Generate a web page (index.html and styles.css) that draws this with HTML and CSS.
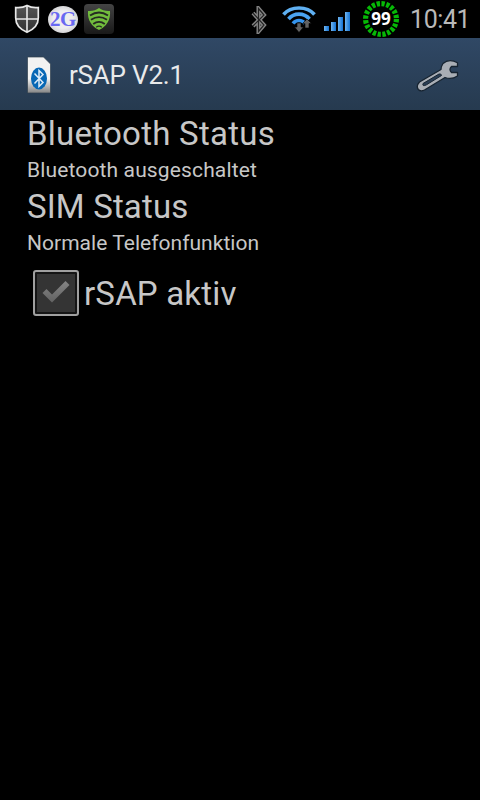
FILE: index.html
```
<!DOCTYPE html>
<html lang="de">
<head>
<meta charset="utf-8">
<title>rSAP</title>
<link rel="stylesheet" href="styles.css">
</head>
<body>
<header class="status">
  <div class="notes">
    <svg width="28" height="30" viewBox="0 0 28 30"><defs><linearGradient id="sg" x2="0" y2="1"><stop stop-color="#555"/><stop offset="1" stop-color="#333"/></linearGradient></defs><path d="M14 1.500Q19 4.200 25.300 3.500V14C25.300 21 20.500 25.500 14 28.300C7.500 25.500 2.700 21 2.700 14V3.500Q9 4.200 14 1.500Z" fill="url(#sg)" stroke="#e8e8e8" stroke-width="1.700"/><path d="M14 2V28M3 15H25" stroke="#e8e8e8" stroke-width="1.600"/></svg>
    <span class="network">2G</span>
    <svg width="30" height="30" viewBox="0 0 30 30"><defs><linearGradient id="wg" x2="0" y2="1"><stop stop-color="#444"/><stop offset="1" stop-color="#191919"/></linearGradient></defs><rect width="30" height="30" rx="4" fill="url(#wg)"/><path d="M15 4Q19.500 7.500 26 7Q27 20 15 26Q3 20 4 7Q10.500 7.500 15 4Z" fill="#72bd3d"/><g fill="none" stroke="#252a22" stroke-width="1.900"><path d="M6 11.500Q15 5.500 24 11.500M7 15.800Q15 10.500 23 15.800M9.200 20Q15 15.800 20.800 20"/><path d="M12.200 23.200Q15 21 17.800 23.200" stroke-width="1.300"/></g></svg>
  </div>
  <div class="system">
    <svg class="bt" width="16" height="28" viewBox="0 0 16 28"><path d="M2 7L13 19L7.500 25.500V2.500L13 9L2 20" fill="none" stroke="#858585" stroke-width="4"/><path d="M2 7L13 19L7.500 25.500V2.500L13 9L2 20" fill="none" stroke="#222" stroke-width="1.200"/></svg>
    <svg class="wifi" width="36" height="28" viewBox="0 0 36 28"><g fill="none" stroke-width="3.600"><path d="M2.500 9.500C10 .8 26 .8 33.500 9.500" stroke="#5fb0f2"/><path d="M7.500 14C13 7.500 23 7.500 28.500 14" stroke="#4aa3f0"/><path d="M12 18.500C15 14.500 21 14.500 24 18.500" stroke="#3594ed"/></g><path d="M16 18H20V22H22.500L18 27.500L13.500 22H16ZM24 23V18.500H21.500L26 14L30.500 18.500H28V23Z" fill="#626262" stroke="#000" stroke-width=".6"/></svg>
    <svg class="signal" width="28" height="20" viewBox="0 0 28 20"><defs><linearGradient id="bg"><stop stop-color="#70b5ef"/><stop offset="1" stop-color="#1472d3"/></linearGradient></defs><g fill="url(#bg)"><path d="M1 14H6V19H1Z"/><path d="M8 10H13V19H8Z"/><path d="M15 5H20V19H15Z"/><path d="M22 0H27V19H22Z"/></g></svg>
    <div class="battery">
      <svg width="38" height="38" viewBox="0 0 38 38"><circle cx="19" cy="19" r="15.400" fill="none" stroke="#06b806" stroke-width="5.200" stroke-dasharray="3.300 1.538"/></svg>
      <span class="level">99</span>
    </div>
    <time class="clock">10:41</time>
  </div>
</header>
<nav class="bar">
  <svg class="app-icon" width="26" height="38" viewBox="0 0 26 38"><defs><linearGradient id="cg" x2="0" y2="1"><stop offset=".6" stop-color="#f2f2f2"/><stop offset="1" stop-color="#858585"/></linearGradient></defs><path d="M1.500 1H17.500L24.500 8V37H1.500Z" fill="url(#cg)" stroke="#31404d" stroke-width=".7"/><ellipse cx="13" cy="22.500" rx="8" ry="11" fill="#0767b5"/><path d="M8.500 17.500L17 26.500L13 30.500V14.500L17 18.500L8.500 27.500" fill="none" stroke="#dcebf8" stroke-width="1.500"/></svg>
  <h1 class="app-title">rSAP V2.1</h1>
  <svg class="wrench" width="44" height="34" viewBox="0 0 44 34"><path d="M41.500 4.800Q33 0 27 5.500Q25 8.500 25 11.500L3.500 24Q-.2 28 2.300 31.500Q4.500 34 8.500 32L29 19.500Q35.500 22 41.500 18V14.500H35.500Q32.500 11.500 35.500 8.500H41.500Z" fill="#a9aeb5" stroke="#172431" stroke-width="1.300" stroke-linejoin="round"/><path d="M7 25.500L23 16Q25.500 15.500 25.500 17.500L10.500 26.800Q6 29 7 25.500Z" fill="#2a3e55" stroke="#172431" stroke-width="1"/></svg>
</nav>
<main class="content">
  <h2 class="heading">Bluetooth Status</h2>
  <p class="detail detail-bt">Bluetooth ausgeschaltet</p>
  <h2 class="heading heading-sim">SIM Status</h2>
  <p class="detail">Normale Telefonfunktion</p>
  <div class="option">
    <span class="box"><svg width="30" height="24" viewBox="0 0 30 24"><defs><linearGradient id="kg" x2="0" y2="1"><stop stop-color="#858585"/><stop offset="1" stop-color="#626262"/></linearGradient></defs><path d="M1.500 13L5.500 9L11 14.500L24.500 1L28.500 5L11 22.500Z" fill="url(#kg)"/></svg></span>
    <span class="heading option-label">rSAP aktiv</span>
  </div>
</main>
</body>
</html>
```
FILE: styles.css
```
* { box-sizing: border-box; }
body { margin: 0; min-height: 800px; background: #000; color: #c7c7c7; font-family: Roboto, sans-serif; }
svg { display: block; flex: none; }
h1, h2, p { margin: 0; font-weight: 400; white-space: nowrap; }
.status { height: 38px; display: flex; justify-content: space-between; }
.notes { display: flex; align-items: center; padding-left: 13px; gap: 7px; }
.network { width: 30px; height: 27px; border-radius: 50%; background: radial-gradient(#eeeeef 45%, #b9b9bd); color: #6969f2; font: bold 21px/27px "Liberation Serif", serif; text-align: center; letter-spacing: -.5px; margin-right: -1px; }
.system { display: flex; align-items: flex-start; padding-right: 10px; }
.bt { margin: 6px 14px 0 0; }
.wifi { margin: 5px 6px 0 0; }
.signal { margin: 12px 11px 0 0; }
.battery { width: 38px; height: 38px; display: grid; }
.battery > * { grid-area: 1 / 1; }
.level { place-self: center; color: #fff; font: bold 17px/20px "Noto Sans", sans-serif; }
.clock { width: 60px; margin-left: 10px; font-size: 25px; line-height: 40px; letter-spacing: -.4px; color: #b9b9b9; white-space: nowrap; }
.bar { height: 72px; display: flex; align-items: center; background: linear-gradient(#304865, #263a4f); padding: 0 20px 0 26px; }
.app-icon { margin-top: 2px; }
.app-title { flex: 1; margin-left: 17px; color: #e9eaeb; font-size: 26px; line-height: 36px; letter-spacing: -.2px; padding-top: 2px; }
.wrench { margin-top: 1px; }
.content { padding: 2px 27px; }
.heading { font-size: 33px; line-height: 44px; letter-spacing: .25px; }
.heading-sim { letter-spacing: .15px; }
.detail { font-size: 21px; line-height: 29px; letter-spacing: .03px; }
.detail-bt { letter-spacing: .14px; }
.option { display: flex; align-items: center; margin: 12px 0 0 6px; }
.box { width: 46px; height: 46px; border: 2px solid #a0a0a0; border-radius: 3px; background: #343434; box-shadow: inset 0 0 0 2px #151515; display: grid; place-items: center; padding-bottom: 3px; }
.option-label { margin-left: 5px; padding-top: 2px; letter-spacing: .18px; }
```
